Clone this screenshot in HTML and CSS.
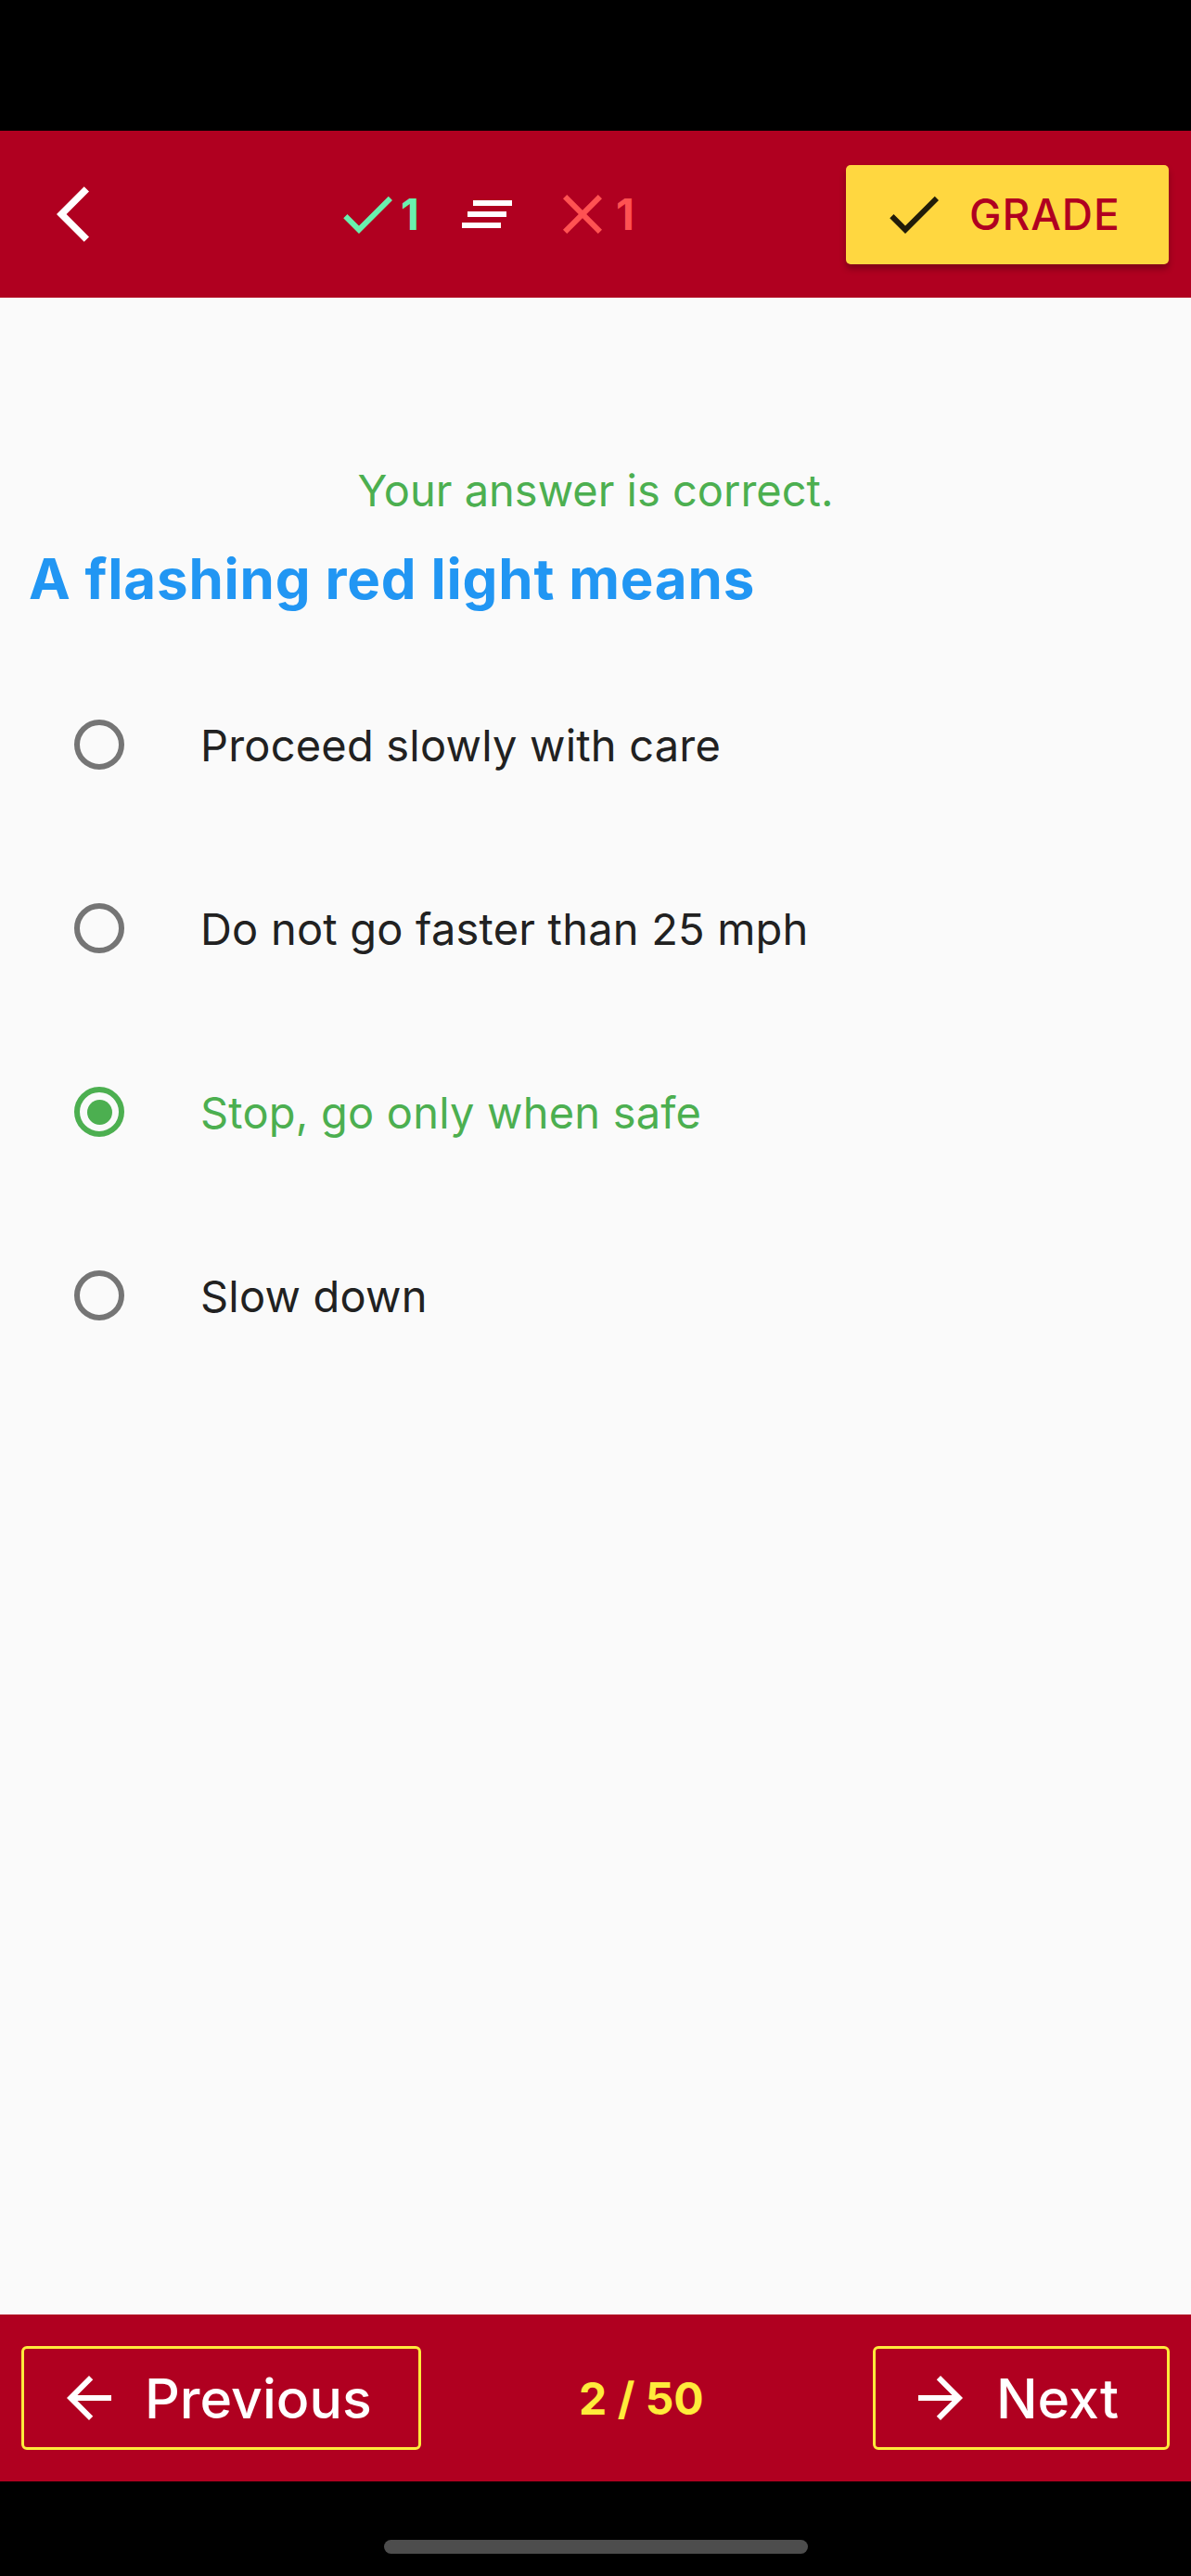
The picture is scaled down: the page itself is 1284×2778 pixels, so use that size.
FILE: index.html
```html
<!DOCTYPE html>
<html lang="en">
<head>
<meta charset="utf-8">
<title>Quiz</title>
<link rel="stylesheet" href="styles.css">
</head>
<body>
<div class="screen">
  <div class="statusbar"></div>
  <header class="appbar">
    <svg class="back" viewBox="0 0 12 24"><path d="M11.67 3.87L9.9 2.1 0 12l9.9 9.9 1.77-1.77L3.54 12z"/></svg>
    <div class="stats">
      <svg class="ic ic-ok" viewBox="0 0 24 24"><path d="M9 16.17L4.83 12l-1.42 1.41L9 19 21 7l-1.41-1.41z"/></svg>
      <span class="count count-ok">1</span>
      <svg class="lines" viewBox="0 0 54 72"><rect x="12" y="21" width="42" height="6"/><rect x="6" y="33" width="42" height="6"/><rect x="0" y="45" width="42" height="6"/></svg>
      <svg class="ic ic-bad" viewBox="0 0 24 24"><path d="M19 6.41L17.59 5 12 10.59 6.41 5 5 6.41 10.59 12 5 17.59 6.41 19 12 13.41 17.59 19 19 17.59 13.41 12z"/></svg>
      <span class="count count-bad">1</span>
    </div>
    <button class="grade">
      <svg class="ic grade-ic" viewBox="0 0 24 24"><path d="M9 16.17L4.83 12l-1.42 1.41L9 19 21 7l-1.41-1.41z"/></svg>
      <span class="grade-label">GRADE</span>
    </button>
  </header>
  <main class="content">
    <p class="feedback">Your answer is correct.</p>
    <h1 class="question">A flashing red light means</h1>
    <ul class="options">
      <li class="option"><span class="radio"></span><span class="label">Proceed slowly with care</span></li>
      <li class="option"><span class="radio"></span><span class="label">Do not go faster than 25 mph</span></li>
      <li class="option option-correct"><span class="radio radio-on"></span><span class="label">Stop, go only when safe</span></li>
      <li class="option"><span class="radio"></span><span class="label">Slow down</span></li>
    </ul>
  </main>
  <footer class="bottombar">
    <button class="nav-btn nav-prev">
      <svg class="ic" viewBox="0 0 24 24"><path d="M20 11H7.83l5.59-5.59L12 4l-8 8 8 8 1.41-1.41L7.83 13H20v-2z"/></svg>
      <span>Previous</span>
    </button>
    <span class="pager">2 / 50</span>
    <button class="nav-btn nav-next">
      <svg class="ic" viewBox="0 0 24 24"><path d="M12 4l-1.41 1.41L16.17 11H4v2h12.17l-5.58 5.59L12 20l8-8z"/></svg>
      <span>Next</span>
    </button>
  </footer>
  <div class="navbar"><div class="home-indicator"></div></div>
</div>
</body>
</html>
```
FILE: styles.css
```css
* { box-sizing: border-box; }
html, body {
  margin: 0;
  padding: 0;
  background: #FAFAFA;
}
body {
  font-family: Inter, Roboto, "Liberation Sans", sans-serif;
  font-variant-ligatures: none;
}
.screen {
  width: 1284px;
  height: 2778px;
  display: flex;
  flex-direction: column;
  overflow: hidden;
}
.statusbar {
  height: 141px;
  background: #000;
  flex: none;
}
.appbar {
  height: 180px;
  flex: none;
  background: #B00020;
  display: flex;
  align-items: center;
}
.back {
  width: 36px;
  height: 72px;
  margin-left: 61px;
  fill: #fff;
  flex: none;
}
.stats {
  display: flex;
  align-items: center;
  margin-left: 263px;
}
.ic {
  width: 72px;
  height: 72px;
  flex: none;
}
.ic-ok { fill: #69F0AE; }
.ic-bad { fill: #FF5252; margin-left: 40px; }
.count {
  font-size: 46px;
  font-weight: 700;
  line-height: 72px;
  width: 28px;
}
.count-ok { color: #69F0AE; }
.count-bad { color: #FF5252; }
.lines {
  width: 54px;
  height: 72px;
  margin-left: 38px;
  fill: #fff;
  flex: none;
}
.grade {
  margin-left: auto;
  margin-right: 24px;
  width: 348px;
  height: 107px;
  border: none;
  border-radius: 5px;
  background: #FFD740;
  box-shadow: 0 5px 7px rgba(0, 0, 0, 0.28);
  display: flex;
  align-items: center;
  padding: 0 0 0 37px;
  font-family: inherit;
}
.grade-ic { fill: rgba(0, 0, 0, 0.87); }
.grade-label {
  margin-left: 24px;
  font-size: 46px;
  font-weight: 500;
  letter-spacing: 1px;
  color: #B00020;
}
.content {
  flex: 1;
  display: flex;
  flex-direction: column;
}
.feedback {
  margin: 180px 0 0;
  font-size: 47px;
  line-height: 56px;
  text-align: center;
  color: #4CAF50;
}
.question {
  margin: 32px 0 0;
  padding-left: 31px;
  font-size: 60px;
  line-height: 70px;
  font-weight: 700;
  letter-spacing: 0.8px;
  color: #2196F3;
}
.options {
  list-style: none;
  margin: 45px 0 0;
  padding: 0;
}
.option {
  height: 198px;
  display: flex;
  align-items: center;
}
.radio {
  width: 54px;
  height: 54px;
  margin-left: 80px;
  border: 6px solid #757575;
  border-radius: 50%;
  display: flex;
  align-items: center;
  justify-content: center;
  flex: none;
}
.radio-on {
  border-color: #4CAF50;
}
.radio-on::after {
  content: "";
  width: 27px;
  height: 27px;
  border-radius: 50%;
  background: #4CAF50;
}
.label {
  margin-left: 82px;
  font-size: 47px;
  letter-spacing: 0.2px;
  color: #212121;
}
.option-correct .label { color: #4CAF50; }
.bottombar {
  height: 180px;
  flex: none;
  background: #B00020;
  display: flex;
  align-items: center;
  justify-content: space-between;
  padding: 0 23px;
}
.nav-btn {
  height: 112px;
  border: 3px solid #FFEB3B;
  border-radius: 6px;
  background: transparent;
  display: flex;
  align-items: center;
  padding: 0 52px 0 34px;
  font-family: inherit;
  font-size: 59px;
  font-weight: 500;
  color: #fff;
}
.nav-prev { padding-right: 50px; }
.nav-btn .ic {
  fill: #fff;
  margin-right: 24px;
}
.pager {
  font-size: 48px;
  font-weight: 700;
  color: #FFEB3B;
  margin-right: 12px;
}
.navbar {
  height: 102px;
  flex: none;
  background: #000;
  padding-top: 63px;
}
.home-indicator {
  width: 457px;
  height: 15px;
  margin: 0 auto;
  border-radius: 8px;
  background: #4D4D4D;
}
```
